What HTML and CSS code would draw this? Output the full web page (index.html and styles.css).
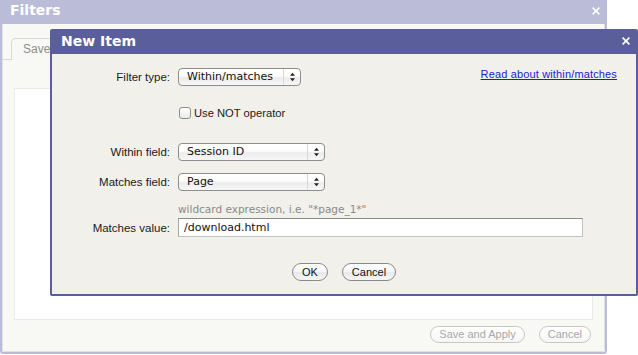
FILE: index.html
```html
<!DOCTYPE html>
<html>
<head>
<meta charset="utf-8">
<link rel="stylesheet" href="styles.css">
</head>
<body>
<div class="filters">
  <div class="filters-title">
    <span>Filters</span>
    <svg class="close close-outer" width="8" height="8" viewBox="0 0 8 8"><path d="M0.6 0.6L7.4 7.4M7.4 0.6L0.6 7.4" stroke="#fff" stroke-width="1.6" fill="none"/></svg>
  </div>
  <div class="filters-body">
    <div class="tabs"><div class="tab">Saved</div></div>
    <div class="panel"></div>
    <div class="footer">
      <button class="btn btn-disabled">Save and Apply</button>
      <button class="btn btn-disabled">Cancel</button>
    </div>
  </div>
</div>

<div class="modal">
  <div class="modal-title">
    <span>New Item</span>
    <svg class="close close-modal" width="8" height="8" viewBox="0 0 8 8"><path d="M0.6 0.6L7.4 7.4M7.4 0.6L0.6 7.4" stroke="#fff" stroke-width="1.6" fill="none"/></svg>
  </div>
  <div class="modal-body">
    <div class="row row-type">
      <label class="label">Filter type:</label>
      <div class="select sel-type">
        <span class="select-text">Within/matches</span>
        <span class="select-arrows"><svg width="7" height="10" viewBox="0 0 7 10"><path d="M3.5 0.8L6 3.8H1Z M1 6.2H6L3.5 9.2Z" fill="#222"/></svg></span>
      </div>
      <a class="help-link" href="#">Read about within/matches</a>
    </div>
    <div class="row row-check">
      <span class="label"></span>
      <span class="checkbox"></span>
      <span class="check-label">Use NOT operator</span>
    </div>
    <div class="row row-within">
      <label class="label">Within field:</label>
      <div class="select sel-field">
        <span class="select-text">Session ID</span>
        <span class="select-arrows"><svg width="7" height="10" viewBox="0 0 7 10"><path d="M3.5 0.8L6 3.8H1Z M1 6.2H6L3.5 9.2Z" fill="#222"/></svg></span>
      </div>
    </div>
    <div class="row row-matches">
      <label class="label">Matches field:</label>
      <div class="select sel-field">
        <span class="select-text">Page</span>
        <span class="select-arrows"><svg width="7" height="10" viewBox="0 0 7 10"><path d="M3.5 0.8L6 3.8H1Z M1 6.2H6L3.5 9.2Z" fill="#222"/></svg></span>
      </div>
    </div>
    <div class="row row-hint">
      <span class="label"></span>
      <span class="hint">wildcard expression, i.e. "*page_1*"</span>
    </div>
    <div class="row row-value">
      <label class="label">Matches value:</label>
      <input class="text-input" type="text" value="/download.html">
    </div>
    <div class="actions">
      <button class="btn">OK</button>
      <button class="btn">Cancel</button>
    </div>
  </div>
</div>
</body>
</html>
```

FILE: styles.css
```css
html, body {
  margin: 0;
  padding: 0;
}
body {
  width: 638px;
  height: 355px;
  overflow: hidden;
  position: relative;
  background: #ffffff;
  font-family: "Liberation Sans", Arial, sans-serif;
  font-size: 11px;
  color: #1a1a1a;
}

/* Background "Filters" dialog */
.filters {
  width: 607px;
  height: 354px;
  box-sizing: border-box;
  border: 2px solid #babcd8;
  border-top: 0;
  border-radius: 0 0 3px 3px;
  background: #f8f8f4;
  display: flex;
  flex-direction: column;
}
.filters-title {
  height: 24px;
  flex: none;
  background: #babcd8;
  color: #ffffff;
  font: bold 14px/21px "DejaVu Sans", sans-serif;
  padding-left: 8px;
  display: flex;
  justify-content: space-between;
  align-items: flex-start;
}
.close-outer {
  margin-top: 7px;
  margin-right: 5px;
}
.filters-body {
  flex: 1;
  border: 1px solid #e2e2dc;
  border-top: 0;
  border-radius: 0 0 2px 2px;
  display: flex;
  flex-direction: column;
}
.tabs {
  margin-top: 14px;
  height: 21px;
  border-bottom: 1px solid #d9d9d2;
  padding-left: 8px;
  display: flex;
}
.tab {
  width: 60px;
  height: 22px;
  box-sizing: border-box;
  border: 1px solid #d9d9d2;
  border-bottom: 0;
  border-radius: 5px 5px 0 0;
  background: #f8f8f4;
  padding: 0 11px;
  font-size: 12px;
  line-height: 21px;
  color: #8e8e8e;
}
.panel {
  margin: 28px 11px 0 11px;
  height: 232px;
  box-sizing: border-box;
  background: #ffffff;
  border: 1px solid #ebebe5;
}
.footer {
  display: flex;
  justify-content: flex-end;
  gap: 14px;
  margin-top: 6px;
  padding-right: 13px;
}

/* Buttons */
.btn {
  height: 18px;
  box-sizing: border-box;
  border: 1px solid #8a8a8a;
  border-radius: 9px;
  background: linear-gradient(#ffffff 0%, #f6f6f6 48%, #e9e9e9 52%, #f6f6f6 100%);
  font: 11px/16px "Liberation Sans", Arial, sans-serif;
  color: #111111;
  padding: 0 9px;
  margin: 0;
}
.btn-disabled {
  height: 17px;
  line-height: 15px;
  border-color: #c6c6c6;
  color: #a8a8a8;
  background: linear-gradient(#ffffff, #f6f6f4);
  padding: 0 8px;
}

/* New Item modal (overlays the Filters dialog) */
.modal {
  position: absolute;
  left: 50px;
  top: 29px;
  width: 588px;
  height: 267px;
  box-sizing: border-box;
  border: 2px solid #5a5f9c;
  border-radius: 2px;
  background: #f1f0eb;
  display: flex;
  flex-direction: column;
}
.modal-title {
  height: 23px;
  flex: none;
  box-sizing: border-box;
  background: #5a5f9c;
  color: #ffffff;
  font: bold 14px/20px "DejaVu Sans", sans-serif;
  padding-left: 9px;
  display: flex;
  justify-content: space-between;
  align-items: flex-start;
}
.close-modal {
  margin-top: 6px;
  margin-right: 6px;
}
.modal-body {
  display: flex;
  flex-direction: column;
  padding-right: 19px;
}
.row {
  display: flex;
  align-items: center;
  gap: 8px;
}
.label {
  width: 118px;
  flex: none;
  text-align: right;
  color: #1a1a1a;
  font-size: 11.5px;
}
.row-type { margin-top: 14px; height: 18px; align-items: flex-start; }
.row-type .label { line-height: 18px; }
.row-check { margin-top: 19px; height: 16px; }
.row-within { margin-top: 22px; height: 18px; }
.row-matches { margin-top: 12px; height: 18px; }
.row-hint { margin-top: 12px; height: 12px; }
.row-value { margin-top: 3px; height: 19px; }

/* Selects */
.select {
  height: 18px;
  box-sizing: border-box;
  border: 1px solid #8d8d8d;
  border-radius: 4px;
  background: linear-gradient(#ffffff 0%, #fcfcfc 45%, #ececec 55%, #f7f7f7 100%);
  display: flex;
  align-items: center;
  font: 11px/16px "DejaVu Sans", sans-serif;
  color: #111111;
}
.sel-type { width: 123px; }
.sel-field { width: 147px; }
.select-text {
  flex: 1;
  padding-left: 8px;
}
.select-arrows {
  width: 16px;
  align-self: stretch;
  border-left: 1px solid #d8d8d8;
  display: flex;
  align-items: center;
  justify-content: center;
}
.help-link {
  margin-left: auto;
  color: #1c1cd6;
  text-decoration: underline;
  line-height: 13px;
  font-size: 11px;
  letter-spacing: 0.15px;
}

/* Checkbox */
.checkbox {
  width: 12px;
  height: 12px;
  box-sizing: border-box;
  border: 1px solid #8e8e8e;
  border-radius: 3px;
  background: linear-gradient(#ffffff, #e9e9e9);
  margin-left: 1px;
}
.check-label {
  margin-left: -5px;
  font-size: 11.2px;
}

/* Hint & input */
.hint {
  font: 10.5px/12px "DejaVu Sans", sans-serif;
  color: #8a8a8a;
}
.text-input {
  width: 405px;
  height: 19px;
  box-sizing: border-box;
  margin: 0;
  border: 1px solid #c2c2c2;
  border-top-color: #8a8a8a;
  border-left-color: #a8a8a8;
  background: #ffffff;
  padding: 0 0 0 5px;
  font: 11px/17px "DejaVu Sans", sans-serif;
  color: #111111;
  outline: none;
}

.actions {
  margin-top: 26px;
  display: flex;
  justify-content: center;
  gap: 14px;
  padding-left: 19px;
}
```
